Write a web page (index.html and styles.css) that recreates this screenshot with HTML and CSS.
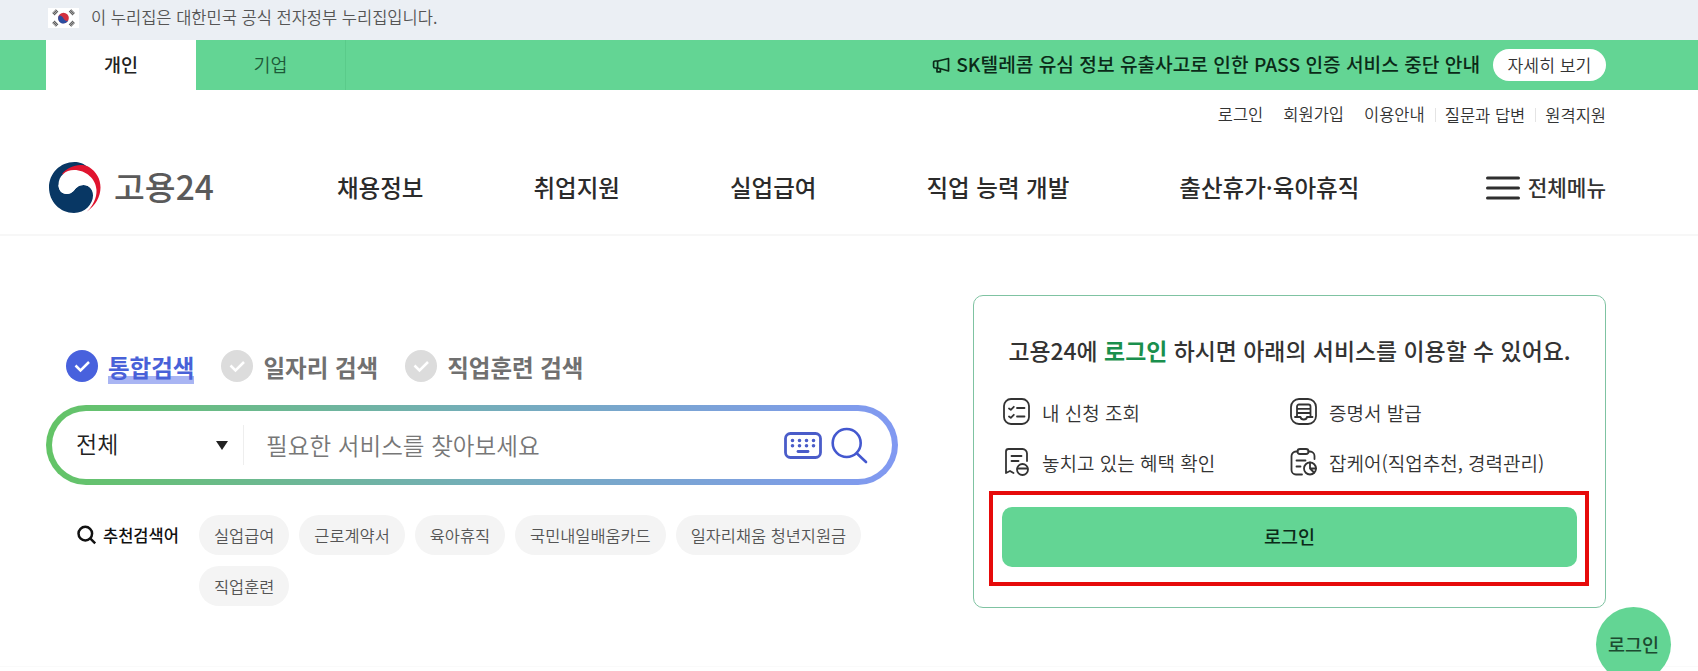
FILE: index.html
```html
<!DOCTYPE html>
<html lang="ko">
<head>
    <meta charset="UTF-8">
    <meta name="viewport" content="width=device-width, initial-scale=1.0">
    <title>고용24</title>
    <link rel="stylesheet" href="styles.css">
</head>
<body>
    <div class="gov-banner">
        <svg class="flag" width="31" height="20" viewBox="0 0 31 20">
            <rect width="31" height="20" fill="#fff"/>
            <circle cx="15.5" cy="10" r="5.3" fill="#d2303f"/>
            <path d="M10.6 8a5.3 5.3 0 1 0 9.8 4C19 13.6 17 13 15.5 10.4 14 8 12 7 10.6 8z" fill="#2a4da0"/>
            <g stroke="#555" stroke-width="3.6" stroke-dasharray="1 .4">
                <path d="M5.5 6.2l3.6-3.6"/>
                <path d="M22 2.6l3.6 3.6"/>
                <path d="M5.5 13.8l3.6 3.6"/>
                <path d="M22 17.4l3.6-3.6"/>
            </g>
        </svg>
        <span>이 누리집은 대한민국 공식 전자정부 누리집입니다.</span>
    </div>

    <div class="topbar">
        <div class="topbar-inner">
            <a class="tab active" href="#">개인</a>
            <a class="tab" href="#">기업</a>
            <div class="notice">
                <svg width="18" height="18" viewBox="0 0 18 18" fill="none" stroke="#0b2a18" stroke-width="1.7" stroke-linejoin="round">
                    <path d="M6 5L16.500 2.500v12.500L6 12H3.200A1.600 1.600 0 0 1 1.600 10.400V6.600A1.600 1.600 0 0 1 3.200 5z"/>
                    <path d="M5.600 5V12M5 12v3.800h3.400V12.800"/>
                </svg>
                <strong>SK텔레콤 유심 정보 유출사고로 인한 PASS 인증 서비스 중단 안내</strong>
                <a class="more" href="#">자세히 보기</a>
            </div>
        </div>
    </div>

    <div class="header">
        <div class="header-inner">
            <ul class="util">
                <li>로그인</li>
                <li>회원가입</li>
                <li>이용안내</li>
                <li class="line">질문과 답변</li>
                <li class="line">원격지원</li>
            </ul>
            <div class="gnb">
                <a class="logo" href="#">
                    <svg width="54" height="54" viewBox="0 0 54 54">
                        <path d="M41 7C36 2.500 31 1 26.500 1 12 1 1 12.500 1 26.500S12 52 26 52c11 0 19-9 19-17.500 0-6-4-10.500-9.500-10.500-5 0-7.500 3-10 6-2 2-4 3-7 3-5 0-8-4-8-9z" fill="#083764"/>
                        <path d="M14 13C20 5.500 32 1.500 41 6c7.500 5 11.500 12 11.500 20.500 0 9-5 18-13.500 24C46 43 48 36 46 25z" fill="#e0142f"/>
                        <path d="M10.500 24c0-9 7-15 15.500-15C38 9 48 18 48.500 29c.3 8-3.500 15.500-9.500 21.500 4-5 6.500-10 6.500-16 0-6-4.500-10.500-10-10.500-5 0-7.500 3-10 6-2 2-4 3-6.500 3-5 0-8.500-4-8.500-9z" fill="#fff"/>
                    </svg>
                    <span>고용24</span>
                </a>
                <ul class="menu">
                    <li>채용정보</li>
                    <li>취업지원</li>
                    <li>실업급여</li>
                    <li>직업 능력 개발</li>
                    <li>출산휴가·육아휴직</li>
                </ul>
                <a class="all-menu" href="#">
                    <svg width="34" height="26" viewBox="0 0 34 26" stroke="#2f2f2f" stroke-width="3" stroke-linecap="round">
                        <path d="M1.500 3h31M1.500 13h31M1.500 23h31"/>
                    </svg>
                    <span>전체메뉴</span>
                </a>
            </div>
        </div>
    </div>

    <div class="main">
        <div class="search-area">
            <div class="search-tabs">
                <a class="search-tab on" href="#">
                    <svg width="32" height="32" viewBox="0 0 32 32"><circle cx="16" cy="16" r="16"/><path d="M9.500 15.500l5 5 8.500-8.500"/></svg>
                    <span>통합검색</span>
                </a>
                <a class="search-tab" href="#">
                    <svg width="32" height="32" viewBox="0 0 32 32"><circle cx="16" cy="16" r="16"/><path d="M9.500 15.500l5 5 8.500-8.500"/></svg>
                    <span>일자리 검색</span>
                </a>
                <a class="search-tab" href="#">
                    <svg width="32" height="32" viewBox="0 0 32 32"><circle cx="16" cy="16" r="16"/><path d="M9.500 15.500l5 5 8.500-8.500"/></svg>
                    <span>직업훈련 검색</span>
                </a>
            </div>

            <div class="search-box">
                <div class="select">
                    <span>전체</span>
                    <svg width="12" height="9" viewBox="0 0 12 9"><path d="M0 0h12L6 9z" fill="#222"/></svg>
                </div>
                <div class="placeholder">필요한 서비스를 찾아보세요</div>
                <svg class="keyboard" width="38" height="27" viewBox="0 0 38 27" fill="none" stroke="#4a5cc9" stroke-width="2.800" stroke-linecap="round">
                    <rect x="1.500" y="1.500" width="35" height="24" rx="5"/>
                    <path d="M8.500 8.500h.01M15.500 8.500h.01M22.500 8.500h.01M29.500 8.500h.01M8.500 13.800h.01M15.500 13.800h.01M22.500 13.800h.01M29.500 13.800h.01" stroke-width="3.600"/>
                    <path d="M14 19.500h10"/>
                </svg>
                <svg width="37" height="37" viewBox="0 0 37 37" fill="none" stroke="#4458cf" stroke-width="2.600" stroke-linecap="round">
                    <circle cx="15.700" cy="16" r="14"/>
                    <path d="M26 26.500l9 8.500"/>
                </svg>
            </div>

            <div class="keywords">
                <div class="keywords-title">
                    <svg width="20" height="20" viewBox="0 0 20 20" fill="none" stroke="#111" stroke-width="2.500">
                        <circle cx="8.300" cy="8.600" r="6.800"/>
                        <path d="M13.200 13.400l5 5"/>
                    </svg>
                    <strong>추천검색어</strong>
                </div>
                <div class="chips">
                    <a href="#">실업급여</a>
                    <a href="#">근로계약서</a>
                    <a href="#">육아휴직</a>
                    <a href="#">국민내일배움카드</a>
                    <a href="#">일자리채움 청년지원금</a>
                    <a href="#">직업훈련</a>
                </div>
            </div>
        </div>

        <div class="login-card">
            <h2>고용24에 <em>로그인</em> 하시면 아래의 서비스를 이용할 수 있어요.</h2>
            <ul class="services">
                <li>
                    <svg width="30" height="30" viewBox="0 0 30 30">
                        <rect x="2" y="2" width="25" height="25" rx="7"/>
                        <path d="M7 11.500l1.800 1.300 3-3M7 19.500l1.800 1.300 3-3M15 11h7.500M15 19.500h7.500"/>
                    </svg>
                    <span>내 신청 조회</span>
                </li>
                <li>
                    <svg width="30" height="30" viewBox="0 0 30 30">
                        <rect x="2" y="2" width="25" height="25" rx="8"/>
                        <path d="M8 19.500V9.500a2 2 0 0 1 2-2h9.500a2 2 0 0 1 2 2v10M6 20h5.500c.5 3.300 6 3.300 6.500 0h5.500M8 11.800h13.500M8 16h13.500"/>
                    </svg>
                    <span>증명서 발급</span>
                </li>
                <li>
                    <svg width="30" height="30" viewBox="0 0 30 30">
                        <path d="M25 14V6.500A4.500 4.500 0 0 0 20.500 2H6.500A2.500 2.500 0 0 0 4 4.500V26l4-2 3.500 2M9.500 9h10M9.500 14h7"/>
                        <circle cx="20.500" cy="22.500" r="5.500"/>
                        <path d="M15.500 21.500h10"/>
                    </svg>
                    <span>놓치고 있는 혜택 확인</span>
                </li>
                <li>
                    <svg width="30" height="30" viewBox="0 0 30 30">
                        <path d="M8.500 4.500H7A4.500 4.500 0 0 0 2.500 9v14A4.500 4.500 0 0 0 7 27.500h6M19.500 4.500H21a4.500 4.500 0 0 1 4.500 4.500v3M7.500 13.500h9M7.500 19.500h4"/>
                        <rect x="8.500" y="2" width="11" height="5" rx="2.500"/>
                        <circle cx="21" cy="21.500" r="6"/>
                        <path d="M21 15.500v6h6M21 21.500l4 4"/>
                    </svg>
                    <span>잡케어(직업추천, 경력관리)</span>
                </li>
            </ul>
            <div class="login-wrap">
                <button class="login-btn">로그인</button>
                <div class="highlight"></div>
            </div>
        </div>
    </div>

    <a class="float-login" href="#">로그인</a>
</body>
</html>
```

FILE: styles.css
```css
* {
    box-sizing: border-box;
}
body {
    font-family: "Noto Sans CJK KR", "Noto Sans", sans-serif;
    font-size: 16.5px;
    font-weight: 350;
    color: #333;
    background-color: #fff;
    margin: 0;
    height: 671px;
    overflow: hidden;
}
a {
    color: inherit;
    text-decoration: none;
}
ul {
    list-style: none;
    margin: 0;
    padding: 0;
}
svg {
    display: block;
    flex-shrink: 0;
}
span, strong, li, h2 {
    white-space: nowrap;
}

/* top banner */
.gov-banner {
    display: flex;
    align-items: center;
    gap: 12px;
    height: 40px;
    padding: 0 0 5px 48px;
    background-color: #ebeff4;
    color: #555;
}
.gov-banner span {
    margin-bottom: 1px;
}
.topbar {
    height: 50px;
    background-color: #63d594;
}
.topbar-inner {
    display: flex;
    width: 1560px;
    height: 100%;
    margin-left: 46px;
}
.tab {
    width: 150px;
    line-height: 48px;
    text-align: center;
    font-size: 18.5px;
    color: #1d5a38;
    border-right: 1px solid #5acb8a;
}
.tab.active {
    background-color: #fff;
    color: #222;
    font-weight: 500;
    border-right: 0;
}
.notice {
    display: flex;
    align-items: center;
    margin-left: auto;
    color: #0b2a18;
}
.notice strong {
    margin: 0 13px 3px 6px;
    font-size: 19.15px;
    font-weight: 500;
}
.more {
    width: 113px;
    height: 32px;
    line-height: 31px;
    border-radius: 16px;
    background-color: #fff;
    color: #333;
    font-size: 17.2px;
    text-align: center;
}

/* header */
.header {
    height: 146px;
    border-bottom: 2px solid #f7f7f7;
}
.header-inner {
    width: 1560px;
    margin-left: 46px;
}
.util {
    display: flex;
    justify-content: flex-end;
    height: 50px;
    line-height: 49px;
}
.util li {
    margin-left: 20px;
}
.util .line {
    display: flex;
    align-items: center;
    margin-left: 10px;
}
.util .line::before {
    content: "";
    width: 1px;
    height: 14px;
    margin-right: 9px;
    background-color: #e4e4e4;
}
.gnb {
    display: flex;
    align-items: center;
    height: 94px;
    padding-bottom: 2px;
}
.gnb svg {
    margin-top: 4px;
}
.logo {
    display: flex;
    align-items: center;
    gap: 12px;
    width: 291px;
    padding-left: 2px;
}
.logo span {
    font-size: 33.5px;
    font-weight: 500;
    line-height: 46px;
    color: #5a5a5a;
}
.menu {
    display: flex;
    gap: 110px;
    margin-top: 1px;
    font-size: 23.5px;
    font-weight: 500;
    color: #2b2b2b;
}
.all-menu {
    display: flex;
    align-items: center;
    gap: 8px;
    margin-left: auto;
    font-size: 21.3px;
    font-weight: 500;
}

/* main */
.main {
    display: flex;
    align-items: flex-start;
    height: 431px;
    padding-left: 46px;
    border-bottom: 1px solid #fafafa;
}
.search-area {
    width: 852px;
    margin-right: 75px;
    padding-top: 112px;
}
.search-tabs {
    display: flex;
    gap: 27px;
    height: 57px;
    padding-left: 20px;
}
.search-tab {
    display: flex;
    align-items: flex-start;
    gap: 10px;
    font-size: 23.5px;
    font-weight: 700;
    color: #707070;
}
.search-tab svg {
    margin-top: 2px;
}
.search-tab span {
    margin-top: 2px;
    line-height: 34px;
}
.search-tab circle {
    fill: #dcdcdc;
}
.search-tab path {
    fill: none;
    stroke: #fff;
    stroke-width: 2.5;
}
.search-tab.on {
    color: #4861d8;
}
.search-tab.on circle {
    fill: #4861dd;
}
.search-tab.on span {
    height: 34px;
    background: linear-gradient(#a9b5f3, #a9b5f3) no-repeat bottom / 100% 8px;
}
.search-box {
    display: flex;
    align-items: center;
    height: 80px;
    padding: 0 24px 0 24px;
    border: 6px solid transparent;
    border-radius: 40px;
    background: linear-gradient(#fff, #fff) padding-box, linear-gradient(90deg, #63c466, #74aeb8 50%, #8199f2) border-box;
}
.select {
    display: flex;
    align-items: center;
    justify-content: space-between;
    width: 168px;
    height: 40px;
    padding-right: 15px;
    border-right: 1px solid #eee;
    font-size: 23px;
    color: #222;
}
.select span {
    margin-bottom: 4px;
}
.placeholder {
    flex: 1;
    padding: 0 0 1px 22px;
    font-size: 23.6px;
    color: #777;
}
.keyboard {
    margin-right: 9px;
}
.keywords {
    display: flex;
    margin-top: 30px;
    padding-left: 31px;
}
.keywords-title {
    display: flex;
    align-items: center;
    gap: 6px;
    width: 122px;
    height: 39px;
    color: #111;
}
.keywords-title strong {
    font-weight: 500;
}
.chips {
    display: flex;
    flex-wrap: wrap;
    gap: 11px 10px;
    width: 690px;
}
.chips a {
    height: 40px;
    padding: 0 15px;
    line-height: 41px;
    border-radius: 20px;
    background-color: #f4f4f4;
    color: #555;
    font-size: 16.4px;
}

/* login card */
.login-card {
    width: 633px;
    height: 313px;
    margin-top: 59px;
    padding: 0 28px;
    border: 1px solid #7fc3a2;
    border-radius: 10px;
}
.login-card h2 {
    margin: 36px 0 0;
    line-height: 36px;
    font-size: 22.9px;
    font-weight: 500;
    text-align: center;
}
.login-card em {
    font-style: normal;
    font-weight: 700;
    color: #1a8f4d;
}
.services {
    display: grid;
    grid-template-columns: 287px 1fr;
    grid-auto-rows: 50px;
    margin-top: 19px;
    font-size: 19px;
}
.services li {
    display: flex;
    align-items: center;
    gap: 10px;
}
.services svg {
    fill: none;
    stroke: #333;
    stroke-width: 1.8;
    stroke-linecap: round;
    stroke-linejoin: round;
}
.login-wrap {
    position: relative;
    margin-top: 20px;
}
.login-btn {
    display: block;
    width: 575px;
    height: 60px;
    padding: 0 0 2px;
    border: none;
    border-radius: 10px;
    background-color: #63d594;
    color: #0b2a18;
    font-family: inherit;
    font-size: 18.5px;
    font-weight: 500;
    cursor: pointer;
}
.highlight {
    position: absolute;
    top: -16px;
    left: -13px;
    width: 600px;
    height: 95px;
    border: 4px solid #e60a0a;
    pointer-events: none;
}
.float-login {
    position: absolute;
    top: 607px;
    left: 1596px;
    width: 75px;
    height: 75px;
    line-height: 74px;
    border-radius: 50%;
    background-color: #63d594;
    color: #1c4a30;
    font-size: 18.5px;
    font-weight: 500;
    text-align: center;
}
```
